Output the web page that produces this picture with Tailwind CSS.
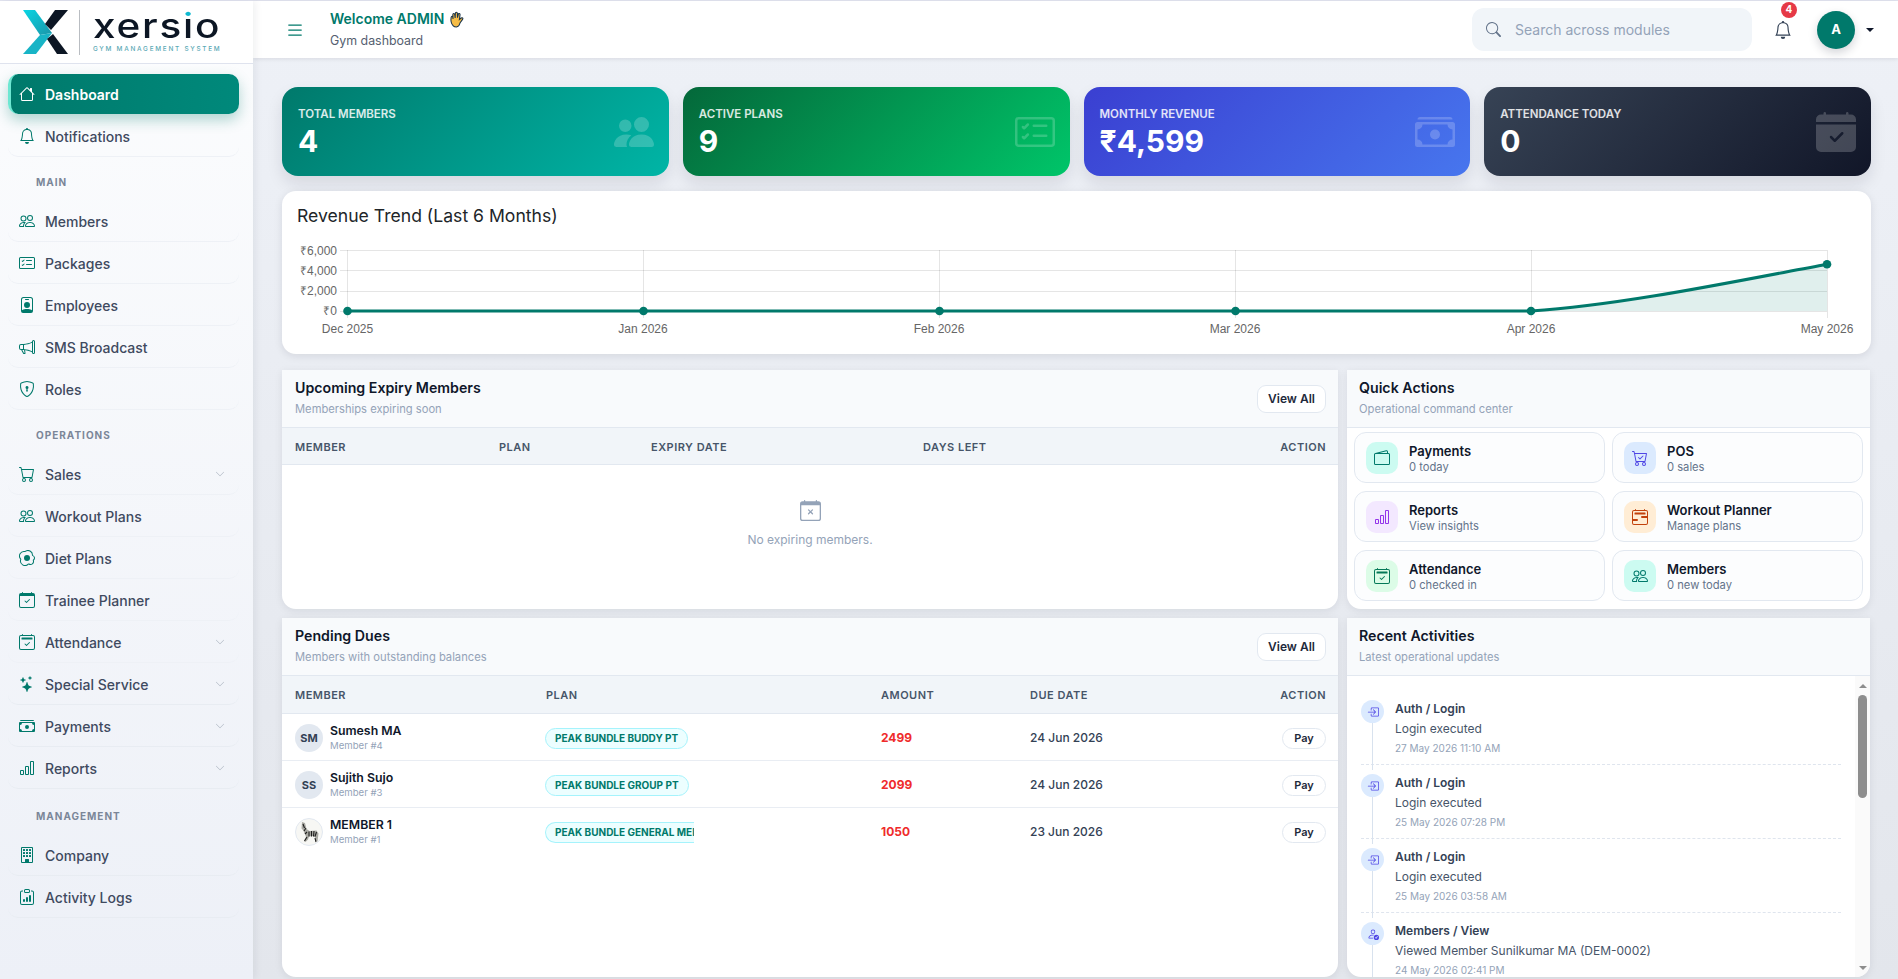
<!doctype html>
<html lang="en">
<head>
<meta charset="utf-8">
<title>Xersio Dashboard</title>
<script src="https://cdn.jsdelivr.net/npm/@tailwindcss/browser@4"></script>
</head>
<body class="m-0">
<div class="font-['Inter',sans-serif] w-[1898px] h-[979px] overflow-hidden flex flex-col bg-[#edf0f6] text-[#334155]">
  <div class="h-px bg-[#e2e4f0] shrink-0"></div>
  <div class="flex flex-1 min-h-0">

    <!-- SIDEBAR -->
    <aside class="w-[253px] shrink-0 flex flex-col bg-[linear-gradient(180deg,#fcfdfe,#edf0f7)] shadow-[2px_0_8px_rgba(15,23,42,0.07)] z-20 relative">
      <div class="h-[63px] shrink-0 bg-white border-b border-[#dfe3ee] flex items-center pl-[23px]">
        <svg class="w-[46px] h-[46px] shrink-0" viewBox="0 0 46 46">
          <defs>
            <linearGradient id="lt" x1="0" y1="0" x2="1" y2="1"><stop offset="0" stop-color="#08d6e4"/><stop offset="1" stop-color="#1b95a8"/></linearGradient>
          </defs>
          <polygon points="0,1 12,1 29,24 17,26" fill="url(#lt)"/>
          <polygon points="0,45 17,26 29,24 13,45" fill="#18b4c6"/>
          <polygon points="45,1 32,1 22,15 28,21" fill="#0c1624"/>
          <polygon points="45,45 34,45 24,30 30,25" fill="#0c1624"/>
        </svg>
        <div class="w-px h-[45px] bg-[#b9bdc2] ml-[10px] mr-[13px]"></div>
        <div class="flex flex-col w-[130px]">
          <span class="block origin-left scale-x-[1.19] text-[34px] leading-[30px] font-medium tracking-[1.5px] text-[#0c1624] h-[34px] whitespace-nowrap">xers<span class="bg-[linear-gradient(180deg,#0fb9d0_34%,#0c1624_34%)] bg-clip-text text-transparent">i</span>o</span>
          <span class="text-[6.4px] leading-[8px] font-medium tracking-[1.75px] text-[#5ba9b5] whitespace-nowrap">GYM MANAGEMENT SYSTEM</span>
        </div>
      </div>
      <nav class="pl-2 pr-[14px] pt-[10px] text-[14px] font-medium text-[#3f4a5f]">
        <a class="h-10 mb-[2px] flex items-center gap-[10px] pl-[8px] rounded-[10px] border-l-[3px] border-[#6ee7d2] bg-[linear-gradient(90deg,#00796b,#00897b)] text-white font-semibold shadow-[0_6px_14px_rgba(0,121,107,0.3)]">
          <svg class="w-4 h-4" viewBox="0 0 16 16" fill="currentColor"><path d="M8.707 1.5a1 1 0 0 0-1.414 0L.646 8.146a.5.5 0 0 0 .708.708L2 8.207V13.5A1.5 1.5 0 0 0 3.5 15h9a1.5 1.5 0 0 0 1.5-1.5V8.207l.646.647a.5.5 0 0 0 .708-.708L13 5.793V2.5a.5.5 0 0 0-.5-.5h-1a.5.5 0 0 0-.5.5v1.293zM13 7.207V13.5a.5.5 0 0 1-.5.5h-9a.5.5 0 0 1-.5-.5V7.207l5-5z"/></svg>
          Dashboard
        </a>
        <a class="h-[41px] mb-px flex items-center gap-[10px] pl-[11px] rounded-[10px] border-b border-[#eef1f6]">
          <svg class="w-4 h-4 text-[#00796b]" viewBox="0 0 16 16" fill="currentColor"><path d="M8 16a2 2 0 0 0 2-2H6a2 2 0 0 0 2 2M8 1.918l-.797.161A4 4 0 0 0 4 6c0 .628-.134 2.197-.459 3.742-.16.767-.376 1.566-.663 2.258h10.244c-.287-.692-.502-1.49-.663-2.258C12.134 8.197 12 6.628 12 6a4 4 0 0 0-3.203-3.92zM14.22 12c.223.447.481.801.78 1H1c.299-.199.557-.553.78-1C2.68 10.2 3 6.88 3 6c0-2.42 1.72-4.44 4.005-4.901a1 1 0 1 1 1.99 0A5 5 0 0 1 13 6c0 .88.32 4.2 1.22 6"/></svg>
          Notifications
        </a>
        <div class="h-[43px] pt-[5px] pl-7 flex items-center text-[10px] font-bold tracking-[1px] text-[#7b8698]">MAIN</div>
        <a class="h-[41px] mb-px flex items-center gap-[10px] pl-[11px] rounded-[10px] border-b border-[#eef1f6]">
          <svg class="w-4 h-4 text-[#00796b]" viewBox="0 0 16 16" fill="currentColor"><path d="M15 14s1 0 1-1-1-4-5-4-5 3-5 4 1 1 1 1zm-7.978-1L7 12.996c.001-.264.167-1.03.76-1.72C8.312 10.629 9.282 10 11 10c1.717 0 2.687.63 3.24 1.276.593.69.758 1.457.76 1.72l-.008.002-.014.002zM11 7a2 2 0 1 0 0-4 2 2 0 0 0 0 4m3-2a3 3 0 1 1-6 0 3 3 0 0 1 6 0M6.936 9.28a6 6 0 0 0-1.23-.247A7 7 0 0 0 5 9c-4 0-5 3-5 4q0 1 1 1h4.216A2.24 2.24 0 0 1 5 13c0-1.01.377-2.042 1.09-2.904.243-.294.526-.569.846-.816M4.92 10A5.5 5.5 0 0 0 4 13H1c0-.26.164-1.03.76-1.724.545-.636 1.492-1.256 3.16-1.275ZM1.5 5.5a3 3 0 1 1 6 0 3 3 0 0 1-6 0m3-2a2 2 0 1 0 0 4 2 2 0 0 0 0-4"/></svg>
          Members
        </a>
        <a class="h-[41px] mb-px flex items-center gap-[10px] pl-[11px] rounded-[10px] border-b border-[#eef1f6]">
          <svg class="w-4 h-4 text-[#00796b]" viewBox="0 0 16 16" fill="currentColor"><path d="M14.5 3a.5.5 0 0 1 .5.5v9a.5.5 0 0 1-.5.5h-13a.5.5 0 0 1-.5-.5v-9a.5.5 0 0 1 .5-.5zm-13-1A1.5 1.5 0 0 0 0 3.5v9A1.5 1.5 0 0 0 1.5 14h13a1.5 1.5 0 0 0 1.5-1.5v-9A1.5 1.5 0 0 0 14.5 2z"/><path d="M7 5.5a.5.5 0 0 1 .5-.5h5a.5.5 0 0 1 0 1h-5a.5.5 0 0 1-.5-.5m-1.496-.854a.5.5 0 0 1 0 .708l-1.5 1.5a.5.5 0 0 1-.708 0l-.5-.5a.5.5 0 1 1 .708-.708l.146.147 1.146-1.147a.5.5 0 0 1 .708 0M7 9.5a.5.5 0 0 1 .5-.5h5a.5.5 0 0 1 0 1h-5a.5.5 0 0 1-.5-.5m-1.496-.854a.5.5 0 0 1 0 .708l-1.5 1.5a.5.5 0 0 1-.708 0l-.5-.5a.5.5 0 0 1 .708-.708l.146.147 1.146-1.147a.5.5 0 0 1 .708 0"/></svg>
          Packages
        </a>
        <a class="h-[41px] mb-px flex items-center gap-[10px] pl-[11px] rounded-[10px] border-b border-[#eef1f6]">
          <svg class="w-4 h-4 text-[#00796b]" viewBox="0 0 16 16" fill="currentColor"><path d="M6.5 2a.5.5 0 0 0 0 1h3a.5.5 0 0 0 0-1zM11 8a3 3 0 1 1-6 0 3 3 0 0 1 6 0"/><path d="M4.5 0A2.5 2.5 0 0 0 2 2.5V14a2 2 0 0 0 2 2h8a2 2 0 0 0 2-2V2.5A2.5 2.5 0 0 0 11.5 0zM3 2.5A1.5 1.5 0 0 1 4.5 1h7A1.5 1.5 0 0 1 13 2.5v10.795a4.2 4.2 0 0 0-.776-.492C11.392 12.387 10.063 12 8 12s-3.392.387-4.224.803a4.2 4.2 0 0 0-.776.492z"/></svg>
          Employees
        </a>
        <a class="h-[41px] mb-px flex items-center gap-[10px] pl-[11px] rounded-[10px] border-b border-[#eef1f6]">
          <svg class="w-4 h-4 text-[#00796b]" viewBox="0 0 16 16" fill="currentColor"><path d="M13 2.5a1.5 1.5 0 0 1 3 0v11a1.5 1.5 0 0 1-3 0v-.214c-2.162-1.241-4.49-1.843-6.912-2.083l.405 2.712A1 1 0 0 1 5.51 15.1h-.548a1 1 0 0 1-.916-.599l-1.85-3.49-.202-.003A2.014 2.014 0 0 1 0 9V7a2.02 2.02 0 0 1 1.992-2.013 75 75 0 0 0 2.483-.075c3.043-.154 6.148-.849 8.525-2.199zm1 0v11a.5.5 0 0 0 1 0v-11a.5.5 0 0 0-1 0m-1 1.35c-2.344 1.205-5.209 1.842-8 2.033v4.233q.27.015.537.036c2.568.189 5.093.744 7.463 1.993zm-9 6.215v-4.13a95 95 0 0 1-1.992.052A1.02 1.02 0 0 0 1 7v2c0 .55.448 1.002 1.006 1.009A61 61 0 0 1 4 10.065m-.657.975 1.609 3.037.01.024h.548l-.002-.014-.443-2.966a68 68 0 0 0-1.722-.082z"/></svg>
          SMS Broadcast
        </a>
        <a class="h-[41px] mb-px flex items-center gap-[10px] pl-[11px] rounded-[10px] border-b border-[#eef1f6]">
          <svg class="w-4 h-4 text-[#00796b]" viewBox="0 0 16 16" fill="currentColor"><path d="M5.338 1.59a61 61 0 0 0-2.837.856.48.48 0 0 0-.328.39c-.554 4.157.726 7.19 2.253 9.188a10.7 10.7 0 0 0 2.287 2.233c.346.244.652.42.893.533q.18.085.293.118a1 1 0 0 0 .101.025 1 1 0 0 0 .1-.025q.114-.034.294-.118c.24-.113.547-.29.893-.533a10.7 10.7 0 0 0 2.287-2.233c1.527-1.997 2.807-5.031 2.253-9.188a.48.48 0 0 0-.328-.39c-.651-.213-1.75-.56-2.837-.855C9.552 1.29 8.531 1.067 8 1.067c-.53 0-1.552.223-2.662.524zM5.072.56C6.157.265 7.31 0 8 0s1.843.265 2.928.56c1.11.3 2.229.655 2.887.87a1.54 1.54 0 0 1 1.044 1.262c.596 4.477-.787 7.795-2.465 9.99a11.8 11.8 0 0 1-2.517 2.453 7 7 0 0 1-1.048.625c-.28.132-.581.24-.829.24s-.548-.108-.829-.24a7 7 0 0 1-1.048-.625 11.8 11.8 0 0 1-2.517-2.453C1.928 10.487.545 7.169 1.141 2.692A1.54 1.54 0 0 1 2.185 1.43 63 63 0 0 1 5.072.56"/><path d="M9.5 6.5a1.5 1.5 0 0 1-1 1.415l.385 1.99a.5.5 0 0 1-.491.595h-.788a.5.5 0 0 1-.49-.595l.384-1.99a1.5 1.5 0 1 1 2-1.415"/></svg>
          Roles
        </a>
        <div class="h-[43px] pt-[5px] pl-7 flex items-center text-[10px] font-bold tracking-[1px] text-[#7b8698]">OPERATIONS</div>
        <a class="h-[41px] mb-px flex items-center gap-[10px] pl-[11px] pr-[14px] rounded-[10px] border-b border-[#eef1f6]">
          <svg class="w-4 h-4 text-[#00796b]" viewBox="0 0 16 16" fill="currentColor"><path d="M0 1.5A.5.5 0 0 1 .5 1H2a.5.5 0 0 1 .485.379L2.89 3H14.5a.5.5 0 0 1 .491.592l-1.5 8A.5.5 0 0 1 13 12H4a.5.5 0 0 1-.491-.408L2.01 3.607 1.61 2H.5a.5.5 0 0 1-.5-.5M3.102 4l1.313 7h8.17l1.313-7zM5 12a2 2 0 1 0 0 4 2 2 0 0 0 0-4m7 0a2 2 0 1 0 0 4 2 2 0 0 0 0-4m-7 1a1 1 0 1 1 0 2 1 1 0 0 1 0-2m7 0a1 1 0 1 1 0 2 1 1 0 0 1 0-2"/></svg>
          <span class="flex-1">Sales</span>
          <svg class="w-[10px] h-[10px] text-[#a9b1bd]" viewBox="0 0 16 16" fill="currentColor"><path d="M1.646 4.646a.5.5 0 0 1 .708 0L8 10.293l5.646-5.647a.5.5 0 0 1 .708.708l-6 6a.5.5 0 0 1-.708 0l-6-6a.5.5 0 0 1 0-.708"/></svg>
        </a>
        <a class="h-[41px] mb-px flex items-center gap-[10px] pl-[11px] rounded-[10px] border-b border-[#eef1f6]">
          <svg class="w-4 h-4 text-[#00796b]" viewBox="0 0 16 16" fill="currentColor"><path d="M15 14s1 0 1-1-1-4-5-4-5 3-5 4 1 1 1 1zm-7.978-1L7 12.996c.001-.264.167-1.03.76-1.72C8.312 10.629 9.282 10 11 10c1.717 0 2.687.63 3.24 1.276.593.69.758 1.457.76 1.72l-.008.002-.014.002zM11 7a2 2 0 1 0 0-4 2 2 0 0 0 0 4m3-2a3 3 0 1 1-6 0 3 3 0 0 1 6 0M6.936 9.28a6 6 0 0 0-1.23-.247A7 7 0 0 0 5 9c-4 0-5 3-5 4q0 1 1 1h4.216A2.24 2.24 0 0 1 5 13c0-1.01.377-2.042 1.09-2.904.243-.294.526-.569.846-.816M4.92 10A5.5 5.5 0 0 0 4 13H1c0-.26.164-1.03.76-1.724.545-.636 1.492-1.256 3.16-1.275ZM1.5 5.5a3 3 0 1 1 6 0 3 3 0 0 1-6 0m3-2a2 2 0 1 0 0 4 2 2 0 0 0 0-4"/></svg>
          Workout Plans
        </a>
        <a class="h-[41px] mb-px flex items-center gap-[10px] pl-[11px] rounded-[10px] border-b border-[#eef1f6]">
          <svg class="w-4 h-4 text-[#00796b]" viewBox="0 0 16 16" fill="currentColor"><path d="M8 11a3 3 0 1 0 0-6 3 3 0 0 0 0 6"/><path d="M13.997 5.17a5 5 0 0 0-8.101-4.09A5 5 0 0 0 1.28 9.342a5 5 0 0 0 8.336 5.109 3.5 3.5 0 0 0 5.201-4.065 3.001 3.001 0 0 0-.822-5.216zm-1-.034a1 1 0 0 0 .668.977 2.001 2.001 0 0 1 .547 3.478 1 1 0 0 0-.341 1.113 2.5 2.5 0 0 1-3.715 2.905 1 1 0 0 0-1.262.152 4 4 0 0 1-6.67-4.087 1 1 0 0 0-.2-1 4 4 0 0 1 3.693-6.61 1 1 0 0 0 .8-.2 4 4 0 0 1 6.48 3.273z"/></svg>
          Diet Plans
        </a>
        <a class="h-[41px] mb-px flex items-center gap-[10px] pl-[11px] rounded-[10px] border-b border-[#eef1f6]">
          <svg class="w-4 h-4 text-[#00796b]" viewBox="0 0 16 16" fill="currentColor"><path d="M10.854 7.146a.5.5 0 0 1 0 .708l-3 3a.5.5 0 0 1-.708 0l-1.5-1.5a.5.5 0 1 1 .708-.708L7.5 9.793l2.646-2.647a.5.5 0 0 1 .708 0"/><path d="M3.5 0a.5.5 0 0 1 .5.5V1h8V.5a.5.5 0 0 1 1 0V1h1a2 2 0 0 1 2 2v11a2 2 0 0 1-2 2H2a2 2 0 0 1-2-2V3a2 2 0 0 1 2-2h1V.5a.5.5 0 0 1 .5-.5M1 4v10a1 1 0 0 0 1 1h12a1 1 0 0 0 1-1V4z"/></svg>
          Trainee Planner
        </a>
        <a class="h-[41px] mb-px flex items-center gap-[10px] pl-[11px] pr-[14px] rounded-[10px] border-b border-[#eef1f6]">
          <svg class="w-4 h-4 text-[#00796b]" viewBox="0 0 16 16" fill="currentColor"><path d="M10.854 8.146a.5.5 0 0 1 0 .708l-3 3a.5.5 0 0 1-.708 0l-1.5-1.5a.5.5 0 0 1 .708-.708L7.5 10.793l2.646-2.647a.5.5 0 0 1 .708 0"/><path d="M3.5 0a.5.5 0 0 1 .5.5V1h8V.5a.5.5 0 0 1 1 0V1h1a2 2 0 0 1 2 2v11a2 2 0 0 1-2 2H2a2 2 0 0 1-2-2V3a2 2 0 0 1 2-2h1V.5a.5.5 0 0 1 .5-.5M2 2a1 1 0 0 0-1 1v11a1 1 0 0 0 1 1h12a1 1 0 0 0 1-1V3a1 1 0 0 0-1-1z"/><path d="M2.5 4a.5.5 0 0 1 .5-.5h10a.5.5 0 0 1 .5.5v1a.5.5 0 0 1-.5.5H3a.5.5 0 0 1-.5-.5z"/></svg>
          <span class="flex-1">Attendance</span>
          <svg class="w-[10px] h-[10px] text-[#a9b1bd]" viewBox="0 0 16 16" fill="currentColor"><path d="M1.646 4.646a.5.5 0 0 1 .708 0L8 10.293l5.646-5.647a.5.5 0 0 1 .708.708l-6 6a.5.5 0 0 1-.708 0l-6-6a.5.5 0 0 1 0-.708"/></svg>
        </a>
        <a class="h-[41px] mb-px flex items-center gap-[10px] pl-[11px] pr-[14px] rounded-[10px] border-b border-[#e8ecf2]">
          <svg class="w-4 h-4 text-[#00796b]" viewBox="0 0 16 16" fill="currentColor"><path d="M7.657 6.247c.11-.33.576-.33.686 0l.645 1.937a2.89 2.89 0 0 0 1.829 1.828l1.936.645c.33.11.33.576 0 .686l-1.937.645a2.89 2.89 0 0 0-1.828 1.829l-.645 1.936a.361.361 0 0 1-.686 0l-.645-1.937a2.89 2.89 0 0 0-1.828-1.828l-1.937-.645a.361.361 0 0 1 0-.686l1.937-.645a2.89 2.89 0 0 0 1.828-1.828zM3.794 1.148a.217.217 0 0 1 .412 0l.387 1.162c.173.518.579.924 1.097 1.097l1.162.387a.217.217 0 0 1 0 .412l-1.162.387A1.73 1.73 0 0 0 4.593 5.69l-.387 1.162a.217.217 0 0 1-.412 0L3.407 5.69A1.73 1.73 0 0 0 2.31 4.593l-1.162-.387a.217.217 0 0 1 0-.412l1.162-.387A1.73 1.73 0 0 0 3.407 2.31zM10.863.099a.145.145 0 0 1 .274 0l.258.774c.115.346.386.617.732.732l.774.258a.145.145 0 0 1 0 .274l-.774.258a1.16 1.16 0 0 0-.732.732l-.258.774a.145.145 0 0 1-.274 0l-.258-.774a1.16 1.16 0 0 0-.732-.732L9.1 2.137a.145.145 0 0 1 0-.274l.774-.258c.346-.115.617-.386.732-.732z"/></svg>
          <span class="flex-1">Special Service</span>
          <svg class="w-[10px] h-[10px] text-[#a9b1bd]" viewBox="0 0 16 16" fill="currentColor"><path d="M1.646 4.646a.5.5 0 0 1 .708 0L8 10.293l5.646-5.647a.5.5 0 0 1 .708.708l-6 6a.5.5 0 0 1-.708 0l-6-6a.5.5 0 0 1 0-.708"/></svg>
        </a>
        <a class="h-[41px] mb-px flex items-center gap-[10px] pl-[11px] pr-[14px] rounded-[10px] border-b border-[#e8ecf2]">
          <svg class="w-4 h-4 text-[#00796b]" viewBox="0 0 16 16" fill="currentColor"><path d="M1 3a1 1 0 0 1 1-1h12a1 1 0 0 1 1 1zm7 8a2 2 0 1 0 0-4 2 2 0 0 0 0 4"/><path d="M0 5a1 1 0 0 1 1-1h14a1 1 0 0 1 1 1v8a1 1 0 0 1-1 1H1a1 1 0 0 1-1-1zm3 0a2 2 0 0 1-2 2v4a2 2 0 0 1 2 2h10a2 2 0 0 1 2-2V7a2 2 0 0 1-2-2z"/></svg>
          <span class="flex-1">Payments</span>
          <svg class="w-[10px] h-[10px] text-[#a9b1bd]" viewBox="0 0 16 16" fill="currentColor"><path d="M1.646 4.646a.5.5 0 0 1 .708 0L8 10.293l5.646-5.647a.5.5 0 0 1 .708.708l-6 6a.5.5 0 0 1-.708 0l-6-6a.5.5 0 0 1 0-.708"/></svg>
        </a>
        <a class="h-[41px] mb-px flex items-center gap-[10px] pl-[11px] pr-[14px] rounded-[10px] border-b border-[#e8ecf2]">
          <svg class="w-4 h-4 text-[#00796b]" viewBox="0 0 16 16" fill="currentColor"><path d="M4 11H2v3h2zm5-4H7v7h2zm5-5v12h-2V2zm-2-1a1 1 0 0 0-1 1v12a1 1 0 0 0 1 1h2a1 1 0 0 0 1-1V2a1 1 0 0 0-1-1zM6 7a1 1 0 0 1 1-1h2a1 1 0 0 1 1 1v7a1 1 0 0 1-1 1H7a1 1 0 0 1-1-1zm-5 4a1 1 0 0 1 1-1h2a1 1 0 0 1 1 1v3a1 1 0 0 1-1 1H2a1 1 0 0 1-1-1z"/></svg>
          <span class="flex-1">Reports</span>
          <svg class="w-[10px] h-[10px] text-[#a9b1bd]" viewBox="0 0 16 16" fill="currentColor"><path d="M1.646 4.646a.5.5 0 0 1 .708 0L8 10.293l5.646-5.647a.5.5 0 0 1 .708.708l-6 6a.5.5 0 0 1-.708 0l-6-6a.5.5 0 0 1 0-.708"/></svg>
        </a>
        <div class="h-[45px] pt-[7px] pl-7 flex items-center text-[10px] font-bold tracking-[1px] text-[#7b8698]">MANAGEMENT</div>
        <a class="h-[41px] mb-px flex items-center gap-[10px] pl-[11px] rounded-[10px] border-b border-[#e8ecf2]">
          <svg class="w-4 h-4 text-[#00796b]" viewBox="0 0 16 16" fill="currentColor"><path d="M4 2.5a.5.5 0 0 1 .5-.5h1a.5.5 0 0 1 .5.5v1a.5.5 0 0 1-.5.5h-1a.5.5 0 0 1-.5-.5zm3 0a.5.5 0 0 1 .5-.5h1a.5.5 0 0 1 .5.5v1a.5.5 0 0 1-.5.5h-1a.5.5 0 0 1-.5-.5zm3.5-.5a.5.5 0 0 0-.5.5v1a.5.5 0 0 0 .5.5h1a.5.5 0 0 0 .5-.5v-1a.5.5 0 0 0-.5-.5zM4 5.5a.5.5 0 0 1 .5-.5h1a.5.5 0 0 1 .5.5v1a.5.5 0 0 1-.5.5h-1a.5.5 0 0 1-.5-.5zM7.5 5a.5.5 0 0 0-.5.5v1a.5.5 0 0 0 .5.5h1a.5.5 0 0 0 .5-.5v-1a.5.5 0 0 0-.5-.5zm2.5.5a.5.5 0 0 1 .5-.5h1a.5.5 0 0 1 .5.5v1a.5.5 0 0 1-.5.5h-1a.5.5 0 0 1-.5-.5zM4.5 8a.5.5 0 0 0-.5.5v1a.5.5 0 0 0 .5.5h1a.5.5 0 0 0 .5-.5v-1a.5.5 0 0 0-.5-.5zm2.5.5a.5.5 0 0 1 .5-.5h1a.5.5 0 0 1 .5.5v1a.5.5 0 0 1-.5.5h-1a.5.5 0 0 1-.5-.5zm3.5-.5a.5.5 0 0 0-.5.5v1a.5.5 0 0 0 .5.5h1a.5.5 0 0 0 .5-.5v-1a.5.5 0 0 0-.5-.5z"/><path d="M2 1a1 1 0 0 1 1-1h10a1 1 0 0 1 1 1v14a1 1 0 0 1-1 1H3a1 1 0 0 1-1-1zm11 0H3v14h3v-2.5a.5.5 0 0 1 .5-.5h3a.5.5 0 0 1 .5.5V15h3z"/></svg>
          Company
        </a>
        <a class="h-[41px] mb-px flex items-center gap-[10px] pl-[11px] rounded-[10px] border-b border-[#e8ecf2]">
          <svg class="w-4 h-4 text-[#00796b]" viewBox="0 0 16 16" fill="currentColor"><path d="M4 11a1 1 0 1 1 2 0v1a1 1 0 1 1-2 0zm6-4a1 1 0 1 1 2 0v5a1 1 0 1 1-2 0zM7 9a1 1 0 0 1 2 0v3a1 1 0 1 1-2 0z"/><path d="M4 1.5H3a2 2 0 0 0-2 2V14a2 2 0 0 0 2 2h10a2 2 0 0 0 2-2V3.5a2 2 0 0 0-2-2h-1v1h1a1 1 0 0 1 1 1V14a1 1 0 0 1-1 1H3a1 1 0 0 1-1-1V3.5a1 1 0 0 1 1-1h1z"/><path d="M9.5 1a.5.5 0 0 1 .5.5v1a.5.5 0 0 1-.5.5h-3a.5.5 0 0 1-.5-.5v-1a.5.5 0 0 1 .5-.5zm-3-1A1.5 1.5 0 0 0 5 1.5v1A1.5 1.5 0 0 0 6.5 4h3A1.5 1.5 0 0 0 11 2.5v-1A1.5 1.5 0 0 0 9.5 0z"/></svg>
          Activity Logs
        </a>
      </nav>
    </aside>

    <!-- MAIN -->
    <div class="flex-1 min-w-0 flex flex-col bg-[linear-gradient(180deg,#eef1f7,#e3e6ec)]">
      <header class="h-[57px] shrink-0 bg-white shadow-[0_1px_4px_rgba(15,23,42,0.1)] flex items-center pl-[32px] pr-[24px] z-10">
        <svg class="w-5 h-5 text-[#00796b]" viewBox="0 0 16 16" fill="currentColor"><path d="M2.5 12a.5.5 0 0 1 .5-.5h10a.5.5 0 0 1 0 1H3a.5.5 0 0 1-.5-.5m0-4a.5.5 0 0 1 .5-.5h10a.5.5 0 0 1 0 1H3a.5.5 0 0 1-.5-.5m0-4a.5.5 0 0 1 .5-.5h10a.5.5 0 0 1 0 1H3a.5.5 0 0 1-.5-.5"/></svg>
        <div class="ml-[25px] flex flex-col">
          <div class="flex items-center gap-[5px] text-[14px] leading-[20px] font-semibold text-[#00796b]">Welcome ADMIN
            <svg class="w-[17px] h-[17px] shrink-0" viewBox="0 0 16 16"><path d="M4 14C2 12 1.5 9 2 6c.3-1.5 1.5-1.3 1.6 0l.2 1.5-.2-4c0-1.5 1.6-1.5 1.8-.1l.4 3.1.2-4.3c0-1.4 1.8-1.4 1.9 0L8 6.3 8.8 3c.3-1.2 1.8-.8 1.6.5L9.8 8l1.7-1.4c1-.8 2.1.3 1.3 1.3L10.500 11c-.7 2.500-1.700 4-3.500 4-1.200 0-2.200-.2-3-1z" fill="#f6bc45" stroke="#17324a" stroke-width="1"/></svg>
          </div>
          <div class="mt-[3px] text-[12.4px] leading-[18px] text-[#556070]">Gym dashboard</div>
        </div>
        <div class="ml-auto w-[280px] h-[43px] rounded-xl bg-[#f1f5f9] flex items-center pl-[14px] gap-[14px]">
          <svg class="w-[15px] h-[15px] text-[#64748b]" viewBox="0 0 16 16" fill="currentColor"><path d="M11.742 10.344a6.5 6.5 0 1 0-1.397 1.398h-.001q.044.06.098.115l3.85 3.85a1 1 0 0 0 1.415-1.414l-3.85-3.85a1 1 0 0 0-.115-.1zM12 6.5a5.500 5.500 0 1 1-11 0 5.500 5.500 0 0 1 11 0"/></svg>
          <span class="text-[14px] text-[#94a3b8]">Search across modules</span>
        </div>
        <div class="relative ml-[22px] w-[18px] h-[18px]">
          <svg class="w-[18px] h-[18px] text-[#334155]" viewBox="0 0 16 16" fill="currentColor"><path d="M8 16a2 2 0 0 0 2-2H6a2 2 0 0 0 2 2M8 1.918l-.797.161A4 4 0 0 0 4 6c0 .628-.134 2.197-.459 3.742-.16.767-.376 1.566-.663 2.258h10.244c-.287-.692-.502-1.49-.663-2.258C12.134 8.197 12 6.628 12 6a4 4 0 0 0-3.203-3.92zM14.22 12c.223.447.481.801.78 1H1c.299-.199.557-.553.78-1C2.68 10.2 3 6.88 3 6c0-2.42 1.72-4.44 4.005-4.901a1 1 0 1 1 1.99 0A5 5 0 0 1 13 6c0 .88.32 4.2 1.22 6"/></svg>
          <span class="absolute -top-[19px] left-[7px] w-4 h-4 rounded-full bg-[#e63946] text-white text-[10px] font-bold flex items-center justify-center">4</span>
        </div>
        <div class="ml-[25px] w-[38px] h-[38px] rounded-full bg-[#00796b] text-white text-[13px] font-bold flex items-center justify-center shadow-[0_4px_10px_rgba(15,23,42,0.18)]">A</div>
        <div class="ml-[11px] w-0 h-0 border-x-[4px] border-x-transparent border-t-[4px] border-t-[#0f172a]"></div>
      </header>

      <main class="flex-1 min-h-0 pl-[29px] pr-[27px] pt-[29px] flex flex-col">
        <div class="grid grid-cols-4 gap-[14px] h-[89px] shrink-0">
          <div class="rounded-2xl bg-[linear-gradient(135deg,#00796b,#00b5a6)] pl-4 pr-[15px] flex items-center justify-between text-white shadow-[0_8px_16px_rgba(15,23,42,0.1)]">
            <div><div class="pt-px text-[11.5px] leading-[16px] font-semibold text-white/85">TOTAL MEMBERS</div><div class="text-[30px] leading-[36px] font-bold mt-[1px]">4</div></div>
            <svg class="w-10 h-10 text-white/20" viewBox="0 0 16 16" fill="currentColor"><path d="M7 14s-1 0-1-1 1-4 5-4 5 3 5 4-1 1-1 1zm4-6a3 3 0 1 0 0-6 3 3 0 0 0 0 6m-5.784 6A2.24 2.24 0 0 1 5 13c0-1.355.68-2.75 1.936-3.72A6.3 6.3 0 0 0 5 9c-4 0-5 3-5 4s1 1 1 1zM4.5 8a2.5 2.5 0 1 0 0-5 2.5 2.5 0 0 0 0 5"/></svg>
          </div>
          <div class="rounded-2xl bg-[linear-gradient(135deg,#04683a,#00c569)] pl-4 pr-[15px] flex items-center justify-between text-white shadow-[0_8px_16px_rgba(15,23,42,0.1)]">
            <div><div class="pt-px text-[11.5px] leading-[16px] font-semibold text-white/85">ACTIVE PLANS</div><div class="text-[30px] leading-[36px] font-bold mt-[1px]">9</div></div>
            <svg class="w-10 h-10 text-white/20" viewBox="0 0 16 16" fill="currentColor"><path d="M14.5 3a.5.5 0 0 1 .5.5v9a.5.5 0 0 1-.5.5h-13a.5.5 0 0 1-.5-.5v-9a.5.5 0 0 1 .5-.5zm-13-1A1.5 1.5 0 0 0 0 3.5v9A1.5 1.5 0 0 0 1.5 14h13a1.5 1.5 0 0 0 1.5-1.5v-9A1.5 1.5 0 0 0 14.5 2z"/><path d="M7 5.5a.5.5 0 0 1 .5-.5h5a.5.5 0 0 1 0 1h-5a.5.5 0 0 1-.5-.5m-1.496-.854a.5.5 0 0 1 0 .708l-1.5 1.5a.5.5 0 0 1-.708 0l-.5-.5a.5.5 0 1 1 .708-.708l.146.147 1.146-1.147a.5.5 0 0 1 .708 0M7 9.5a.5.5 0 0 1 .5-.5h5a.5.5 0 0 1 0 1h-5a.5.5 0 0 1-.5-.5m-1.496-.854a.5.5 0 0 1 0 .708l-1.5 1.5a.5.5 0 0 1-.708 0l-.5-.5a.5.5 0 0 1 .708-.708l.146.147 1.146-1.147a.5.5 0 0 1 .708 0"/></svg>
          </div>
          <div class="rounded-2xl bg-[linear-gradient(135deg,#3a3fd1,#4776ee)] pl-4 pr-[15px] flex items-center justify-between text-white shadow-[0_8px_16px_rgba(15,23,42,0.1)]">
            <div><div class="pt-px text-[11.5px] leading-[16px] font-semibold text-white/85">MONTHLY REVENUE</div><div class="text-[30px] leading-[36px] font-bold mt-[1px]">₹4,599</div></div>
            <svg class="w-10 h-10 text-white/20" viewBox="0 0 16 16" fill="currentColor"><path d="M1 3a1 1 0 0 1 1-1h12a1 1 0 0 1 1 1zm7 8a2 2 0 1 0 0-4 2 2 0 0 0 0 4"/><path d="M0 5a1 1 0 0 1 1-1h14a1 1 0 0 1 1 1v8a1 1 0 0 1-1 1H1a1 1 0 0 1-1-1zm3 0a2 2 0 0 1-2 2v4a2 2 0 0 1 2 2h10a2 2 0 0 1 2-2V7a2 2 0 0 1-2-2z"/></svg>
          </div>
          <div class="rounded-2xl bg-[linear-gradient(135deg,#374355,#111628)] pl-4 pr-[15px] flex items-center justify-between text-white shadow-[0_8px_16px_rgba(15,23,42,0.1)]">
            <div><div class="pt-px text-[11.5px] leading-[16px] font-semibold text-white/85">ATTENDANCE TODAY</div><div class="text-[30px] leading-[36px] font-bold mt-[1px]">0</div></div>
            <svg class="w-10 h-10 text-white/20" viewBox="0 0 16 16" fill="currentColor"><path d="M4 .5a.5.5 0 0 0-1 0V1H2a2 2 0 0 0-2 2v1h16V3a2 2 0 0 0-2-2h-1V.5a.5.5 0 0 0-1 0V1H4zM16 14V5H0v9a2 2 0 0 0 2 2h12a2 2 0 0 0 2-2m-5.146-5.146-3 3a.5.5 0 0 1-.708 0l-1.5-1.5a.5.5 0 0 1 .708-.708L7.5 10.793l2.646-2.647a.5.5 0 0 1 .708.708"/></svg>
          </div>
        </div>

        <section class="mt-[15px] h-[163px] shrink-0 rounded-[14px] bg-white shadow-[0_2px_8px_rgba(15,23,42,0.1)] flex flex-col">
          <h2 class="h-[49px] shrink-0 pl-[15px] pt-[13px] text-[17.6px] leading-[24px] font-normal text-[#212529]">Revenue Trend (Last 6 Months)</h2>
          <svg class="block" width="1589" height="114" viewBox="0 0 1589 114" font-family="Liberation Sans, Arial, sans-serif" font-size="12" fill="#666">
            <g stroke="rgba(0,0,0,0.1)" stroke-width="1" fill="none">
              <path d="M58 10.5H1545M58 30.5H1545M58 51.5H1545M58 71.5H1545"/>
              <path d="M65.5 10V78M361.5 10V78M657.5 10V78M953.5 10V78M1249.5 10V78M1545.5 10V78"/>
            </g>
            <path d="M1249 71C1340 65 1450 42 1545 24.200V71Z" fill="rgba(0,121,107,0.12)"/>
            <path d="M65 71H1249C1340 65 1450 42 1545 24.200" fill="none" stroke="#00796b" stroke-width="3"/>
            <g fill="#00796b"><circle cx="65.500" cy="71" r="4.300"/><circle cx="361.500" cy="71" r="4.300"/><circle cx="657.500" cy="71" r="4.300"/><circle cx="953.500" cy="71" r="4.300"/><circle cx="1249" cy="71" r="4.300"/><circle cx="1545" cy="24.200" r="4.300"/></g>
            <g text-anchor="end"><text x="55" y="14.500">₹6,000</text><text x="55" y="34.500">₹4,000</text><text x="55" y="55">₹2,000</text><text x="55" y="75">₹0</text></g>
            <g text-anchor="middle"><text x="65.500" y="93">Dec 2025</text><text x="361" y="93">Jan 2026</text><text x="657" y="93">Feb 2026</text><text x="953" y="93">Mar 2026</text><text x="1249" y="93">Apr 2026</text><text x="1545" y="93">May 2026</text></g>
          </svg>
        </section>

        <div class="mt-4 grid grid-cols-[1056px_523px] grid-rows-[239px_359px] gap-[9px]">
          <!-- Upcoming -->
          <section class="rounded-b-[14px] bg-white shadow-[0_2px_8px_rgba(15,23,42,0.08)] overflow-hidden flex flex-col">
            <div class="h-[58px] shrink-0 bg-[#f8fafc] border-b border-[#e2e8f0] pl-[13px] pr-3 flex items-center justify-between">
              <div class="pb-px"><div class="text-[14.2px] leading-[18px] font-semibold text-[#0f172a]">Upcoming Expiry Members</div><div class="mt-[4px] text-[11.2px] leading-[16px] text-[#94a3b8]">Memberships expiring soon</div></div>
              <div class="w-[69px] h-7 rounded-[9px] border border-[#e2e8f0] bg-white text-[12px] font-semibold text-[#1e293b] flex items-center justify-center">View All</div>
            </div>
            <div class="h-[37px] shrink-0 pt-[2px] bg-[#f1f5f9] border-b border-[#e2e8f0] pl-[13px] pr-3 grid grid-cols-[204px_152px_272px_1fr_auto] items-center text-[11px] font-semibold tracking-[0.5px] text-[#475569]">
              <span>MEMBER</span><span>PLAN</span><span>EXPIRY DATE</span><span>DAYS LEFT</span><span>ACTION</span>
            </div>
            <div class="flex-1 flex flex-col items-center pt-[35px] text-[#94a3b8]">
              <svg class="w-[21px] h-[21px]" viewBox="0 0 16 16" fill="currentColor"><path d="M6.146 7.146a.5.5 0 0 1 .708 0L8 8.293l1.146-1.147a.5.5 0 1 1 .708.708L8.707 9l1.147 1.146a.5.5 0 0 1-.708.708L8 9.707l-1.146 1.147a.5.5 0 0 1-.708-.708L7.293 9 6.146 7.854a.5.5 0 0 1 0-.708"/><path d="M3.5 0a.5.5 0 0 1 .5.5V1h8V.5a.5.5 0 0 1 1 0V1h1a2 2 0 0 1 2 2v11a2 2 0 0 1-2 2H2a2 2 0 0 1-2-2V3a2 2 0 0 1 2-2h1V.5a.5.5 0 0 1 .5-.5M1 4v10a1 1 0 0 0 1 1h12a1 1 0 0 0 1-1V4z"/></svg>
              <div class="mt-[10px] text-[12px] leading-[18px]">No expiring members.</div>
            </div>
          </section>

          <!-- Quick actions -->
          <section class="rounded-b-[14px] bg-white shadow-[0_2px_8px_rgba(15,23,42,0.08)] overflow-hidden flex flex-col">
            <div class="h-[58px] shrink-0 bg-[#f8fafc] border-b border-[#e2e8f0] px-3 flex items-center">
              <div class="pb-px"><div class="text-[14.2px] leading-[18px] font-semibold text-[#0f172a]">Quick Actions</div><div class="mt-[4px] text-[11.2px] leading-[16px] text-[#94a3b8]">Operational command center</div></div>
            </div>
            <div class="grid grid-cols-2 gap-x-[7px] gap-y-2 px-[7px] pt-[4px] auto-rows-[51px]">
              <div class="rounded-xl border border-[#e2e8f0] bg-[#fcfdfe] flex items-center pl-[11px] gap-[11px]">
                <div class="w-8 h-8 rounded-[10px] bg-[#ccfbf1] flex items-center justify-center"><svg class="w-4 h-4 text-[#00796b]" viewBox="0 0 16 16" fill="currentColor"><path d="M12.136.326A1.5 1.5 0 0 1 14 1.78V3h.5A1.5 1.5 0 0 1 16 4.5v9a1.5 1.5 0 0 1-1.5 1.5h-13A1.5 1.5 0 0 1 0 13.5v-9a1.5 1.5 0 0 1 1.432-1.499zM5.562 3H13V1.78a.5.5 0 0 0-.621-.484zM1.5 4a.5.5 0 0 0-.5.5v9a.5.5 0 0 0 .5.5h13a.5.5 0 0 0 .5-.5v-9a.5.5 0 0 0-.5-.5z"/></svg></div>
                <div class="pt-[2px]"><div class="text-[13px] leading-[16px] font-semibold text-[#0f172a]">Payments</div><div class="text-[11.2px] leading-[16px] text-[#64748b]">0 today</div></div>
              </div>
              <div class="rounded-xl border border-[#e2e8f0] bg-[#fcfdfe] flex items-center pl-[11px] gap-[11px]">
                <div class="w-8 h-8 rounded-[10px] bg-[#dbeafe] flex items-center justify-center"><svg class="w-4 h-4 text-[#4f46e5]" viewBox="0 0 16 16" fill="currentColor"><path d="M11.354 6.354a.5.5 0 0 0-.708-.708L8 8.293 6.854 7.146a.5.5 0 1 0-.708.708l1.5 1.5a.5.5 0 0 0 .708 0z"/><path d="M0 1.5A.5.5 0 0 1 .5 1H2a.5.5 0 0 1 .485.379L2.89 3H14.5a.5.5 0 0 1 .491.592l-1.5 8A.5.5 0 0 1 13 12H4a.5.5 0 0 1-.491-.408L2.01 3.607 1.61 2H.5a.5.5 0 0 1-.5-.5M3.102 4l1.313 7h8.17l1.313-7zM5 12a2 2 0 1 0 0 4 2 2 0 0 0 0-4m7 0a2 2 0 1 0 0 4 2 2 0 0 0 0-4m-7 1a1 1 0 1 1 0 2 1 1 0 0 1 0-2m7 0a1 1 0 1 1 0 2 1 1 0 0 1 0-2"/></svg></div>
                <div class="pt-[2px]"><div class="text-[13px] leading-[16px] font-semibold text-[#0f172a]">POS</div><div class="text-[11.2px] leading-[16px] text-[#64748b]">0 sales</div></div>
              </div>
              <div class="rounded-xl border border-[#e2e8f0] bg-[#fcfdfe] flex items-center pl-[11px] gap-[11px]">
                <div class="w-8 h-8 rounded-[10px] bg-[#f3e8ff] flex items-center justify-center"><svg class="w-4 h-4 text-[#9333ea]" viewBox="0 0 16 16" fill="currentColor"><path d="M4 11H2v3h2zm5-4H7v7h2zm5-5v12h-2V2zm-2-1a1 1 0 0 0-1 1v12a1 1 0 0 0 1 1h2a1 1 0 0 0 1-1V2a1 1 0 0 0-1-1zM6 7a1 1 0 0 1 1-1h2a1 1 0 0 1 1 1v7a1 1 0 0 1-1 1H7a1 1 0 0 1-1-1zm-5 4a1 1 0 0 1 1-1h2a1 1 0 0 1 1 1v3a1 1 0 0 1-1 1H2a1 1 0 0 1-1-1z"/></svg></div>
                <div class="pt-[2px]"><div class="text-[13px] leading-[16px] font-semibold text-[#0f172a]">Reports</div><div class="text-[11.2px] leading-[16px] text-[#64748b]">View insights</div></div>
              </div>
              <div class="rounded-xl border border-[#e2e8f0] bg-[#fcfdfe] flex items-center pl-[11px] gap-[11px]">
                <div class="w-8 h-8 rounded-[10px] bg-[#ffedd5] flex items-center justify-center"><svg class="w-4 h-4 text-[#c2410c]" viewBox="0 0 16 16" fill="currentColor"><path d="M3.5 0a.5.5 0 0 1 .5.5V1h8V.5a.5.5 0 0 1 1 0V1h1a2 2 0 0 1 2 2v11a2 2 0 0 1-2 2H2a2 2 0 0 1-2-2V3a2 2 0 0 1 2-2h1V.5a.5.5 0 0 1 .5-.5M2 2a1 1 0 0 0-1 1v11a1 1 0 0 0 1 1h12a1 1 0 0 0 1-1V3a1 1 0 0 0-1-1z"/><path d="M2.5 4a.5.5 0 0 1 .5-.5h10a.5.5 0 0 1 .5.5v1a.5.5 0 0 1-.5.5H3a.5.5 0 0 1-.5-.5zM9 8a1 1 0 0 1 1-1h5v2h-5a1 1 0 0 1-1-1m-8 2h4a1 1 0 1 1 0 2H1z"/></svg></div>
                <div class="pt-[2px]"><div class="text-[13px] leading-[16px] font-semibold text-[#0f172a]">Workout Planner</div><div class="text-[11.2px] leading-[16px] text-[#64748b]">Manage plans</div></div>
              </div>
              <div class="rounded-xl border border-[#e2e8f0] bg-[#fcfdfe] flex items-center pl-[11px] gap-[11px]">
                <div class="w-8 h-8 rounded-[10px] bg-[#dcfce7] flex items-center justify-center"><svg class="w-4 h-4 text-[#047857]" viewBox="0 0 16 16" fill="currentColor"><path d="M10.854 8.146a.5.5 0 0 1 0 .708l-3 3a.5.5 0 0 1-.708 0l-1.5-1.5a.5.5 0 0 1 .708-.708L7.5 10.793l2.646-2.647a.5.5 0 0 1 .708 0"/><path d="M3.5 0a.5.5 0 0 1 .5.5V1h8V.5a.5.5 0 0 1 1 0V1h1a2 2 0 0 1 2 2v11a2 2 0 0 1-2 2H2a2 2 0 0 1-2-2V3a2 2 0 0 1 2-2h1V.5a.5.5 0 0 1 .5-.5M2 2a1 1 0 0 0-1 1v11a1 1 0 0 0 1 1h12a1 1 0 0 0 1-1V3a1 1 0 0 0-1-1z"/><path d="M2.5 4a.5.5 0 0 1 .5-.5h10a.5.5 0 0 1 .5.5v1a.5.5 0 0 1-.5.5H3a.5.5 0 0 1-.5-.5z"/></svg></div>
                <div class="pt-[2px]"><div class="text-[13px] leading-[16px] font-semibold text-[#0f172a]">Attendance</div><div class="text-[11.2px] leading-[16px] text-[#64748b]">0 checked in</div></div>
              </div>
              <div class="rounded-xl border border-[#e2e8f0] bg-[#fcfdfe] flex items-center pl-[11px] gap-[11px]">
                <div class="w-8 h-8 rounded-[10px] bg-[#ccfbf1] flex items-center justify-center"><svg class="w-4 h-4 text-[#00796b]" viewBox="0 0 16 16" fill="currentColor"><path d="M15 14s1 0 1-1-1-4-5-4-5 3-5 4 1 1 1 1zm-7.978-1L7 12.996c.001-.264.167-1.03.76-1.72C8.312 10.629 9.282 10 11 10c1.717 0 2.687.63 3.24 1.276.593.69.758 1.457.76 1.72l-.008.002-.014.002zM11 7a2 2 0 1 0 0-4 2 2 0 0 0 0 4m3-2a3 3 0 1 1-6 0 3 3 0 0 1 6 0M6.936 9.28a6 6 0 0 0-1.23-.247A7 7 0 0 0 5 9c-4 0-5 3-5 4q0 1 1 1h4.216A2.24 2.24 0 0 1 5 13c0-1.01.377-2.042 1.09-2.904.243-.294.526-.569.846-.816M4.92 10A5.5 5.5 0 0 0 4 13H1c0-.26.164-1.03.76-1.724.545-.636 1.492-1.256 3.16-1.275ZM1.5 5.5a3 3 0 1 1 6 0 3 3 0 0 1-6 0m3-2a2 2 0 1 0 0 4 2 2 0 0 0 0-4"/></svg></div>
                <div class="pt-[2px]"><div class="text-[13px] leading-[16px] font-semibold text-[#0f172a]">Members</div><div class="text-[11.2px] leading-[16px] text-[#64748b]">0 new today</div></div>
              </div>
            </div>
          </section>

          <!-- Pending dues -->
          <section class="rounded-b-[14px] bg-white shadow-[0_2px_8px_rgba(15,23,42,0.08)] overflow-hidden flex flex-col">
            <div class="h-[58px] shrink-0 bg-[#f8fafc] border-b border-[#e2e8f0] pl-[13px] pr-3 flex items-center justify-between">
              <div class="pb-px"><div class="text-[14.2px] leading-[18px] font-semibold text-[#0f172a]">Pending Dues</div><div class="mt-[4px] text-[11.2px] leading-[16px] text-[#94a3b8]">Members with outstanding balances</div></div>
              <div class="w-[69px] h-7 rounded-[9px] border border-[#e2e8f0] bg-white text-[12px] font-semibold text-[#1e293b] flex items-center justify-center">View All</div>
            </div>
            <div class="h-[38px] shrink-0 pt-px bg-[#f1f5f9] border-b border-[#e2e8f0] pl-[13px] pr-3 grid grid-cols-[251px_335px_149px_1fr_auto] items-center text-[11px] font-semibold tracking-[0.5px] text-[#475569]">
              <span>MEMBER</span><span>PLAN</span><span>AMOUNT</span><span>DUE DATE</span><span>ACTION</span>
            </div>
            <div class="h-[47px] pt-[2px] border-b border-[#e9edf3] pl-[13px] pr-3 grid grid-cols-[251px_335px_149px_1fr_auto] items-center">
              <div class="flex items-center gap-[7px]"><div class="w-7 h-7 rounded-full bg-[#e2e8f0] text-[11px] font-bold text-[#334155] flex items-center justify-center">SM</div><div><div class="text-[12.3px] leading-[15px] font-semibold text-[#0f172a]">Sumesh MA</div><div class="text-[9.6px] leading-[15px] text-[#94a3b8]">Member #4</div></div></div>
              <div class="-ml-px w-fit h-[21px] flex items-center px-[9px] rounded-full bg-[#ecfeff] border border-[#a5f3fc] text-[10px] font-bold text-[#00796b]">PEAK BUNDLE BUDDY PT</div>
              <div class="text-[12px] font-bold text-[#ef2b2b]">2499</div>
              <div class="text-[12px] font-medium text-[#334155]">24 Jun 2026</div>
              <div class="w-[44px] h-[21px] rounded-full border border-[#e2e8f0] bg-white text-[11px] font-semibold text-[#1e293b] flex items-center justify-center">Pay</div>
            </div>
            <div class="h-[47px] pt-[2px] border-b border-[#e9edf3] pl-[13px] pr-3 grid grid-cols-[251px_335px_149px_1fr_auto] items-center">
              <div class="flex items-center gap-[7px]"><div class="w-7 h-7 rounded-full bg-[#e2e8f0] text-[11px] font-bold text-[#334155] flex items-center justify-center">SS</div><div><div class="text-[12.3px] leading-[15px] font-semibold text-[#0f172a]">Sujith Sujo</div><div class="text-[9.6px] leading-[15px] text-[#94a3b8]">Member #3</div></div></div>
              <div class="-ml-px w-fit h-[21px] flex items-center px-[9px] rounded-full bg-[#ecfeff] border border-[#a5f3fc] text-[10px] font-bold text-[#00796b]">PEAK BUNDLE GROUP PT</div>
              <div class="text-[12px] font-bold text-[#ef2b2b]">2099</div>
              <div class="text-[12px] font-medium text-[#334155]">24 Jun 2026</div>
              <div class="w-[44px] h-[21px] rounded-full border border-[#e2e8f0] bg-white text-[11px] font-semibold text-[#1e293b] flex items-center justify-center">Pay</div>
            </div>
            <div class="h-[47px] pt-px pl-[13px] pr-3 grid grid-cols-[251px_335px_149px_1fr_auto] items-center">
              <div class="flex items-center gap-[7px]"><svg class="w-7 h-7" viewBox="0 0 28 28"><circle cx="14" cy="14" r="13.500" fill="#f7f7f4" stroke="#e2e8f0"/><path d="M7 4l3 1 1.500 6 3 2 7-.5 2 3-.5 4-.5 4-1.500-.5-.5-3.500-2.500-1.500-4 .5-1 3-2.500 2.500-1.500-1 2-4-1-3-2-4-1.500-1.500z" fill="#a9a9a3"/><path d="M8 6l1.500 4M11 10l-2 3M12 14l-2 2M14 13.500v5M16.500 13v5.500M19 13l-.5 5.500M21.500 14l-1.500 4.500M12 19l-2.500 4M20 20l1 4" stroke="#1f1f1e" stroke-width="1.100" fill="none"/></svg><div><div class="text-[12.3px] leading-[15px] font-semibold text-[#0f172a]">MEMBER 1</div><div class="text-[9.6px] leading-[15px] text-[#94a3b8]">Member #1</div></div></div>
              <div class="-ml-px w-[149px] h-[21px] flex items-center pl-[9px] rounded-l-full overflow-hidden whitespace-nowrap bg-[#ecfeff] border-y border-l border-[#a5f3fc] text-[10px] font-bold text-[#00796b]">PEAK BUNDLE GENERAL MEMBERSHIP</div>
              <div class="text-[12px] font-bold text-[#ef2b2b]">1050</div>
              <div class="text-[12px] font-medium text-[#334155]">23 Jun 2026</div>
              <div class="w-[44px] h-[21px] rounded-full border border-[#e2e8f0] bg-white text-[11px] font-semibold text-[#1e293b] flex items-center justify-center">Pay</div>
            </div>
          </section>

          <!-- Recent -->
          <section class="relative rounded-b-[14px] bg-white shadow-[0_2px_8px_rgba(15,23,42,0.08)] overflow-hidden flex flex-col">
            <div class="h-[58px] shrink-0 bg-[#f8fafc] border-b border-[#e2e8f0] px-3 flex items-center">
              <div class="pb-px"><div class="text-[14.2px] leading-[18px] font-semibold text-[#0f172a]">Recent Activities</div><div class="mt-[4px] text-[11.2px] leading-[16px] text-[#94a3b8]">Latest operational updates</div></div>
            </div>
            <div class="flex-1 min-h-0 overflow-hidden pl-[14px] pr-[29px] pt-[24px]">
              <div class="relative h-[74px]">
                <div class="absolute left-[11px] top-[23px] w-px h-[47px] bg-[#d8e2ee]"></div>
                <div class="h-[65px] border-b border-dashed border-[#dfe5ee] flex gap-[11px]">
                  <div class="w-[23px] h-[23px] rounded-full bg-[#dbeafe] flex items-center justify-center shrink-0"><svg class="w-3 h-3 text-[#4f46e5]" viewBox="0 0 16 16" fill="currentColor"><path d="M6 3.5a.5.5 0 0 1 .5-.5h8a.5.5 0 0 1 .5.5v9a.5.5 0 0 1-.5.5h-8a.5.5 0 0 1-.5-.5v-2a.5.5 0 0 0-1 0v2A1.5 1.5 0 0 0 6.5 14h8a1.5 1.5 0 0 0 1.5-1.5v-9A1.5 1.5 0 0 0 14.5 2h-8A1.5 1.5 0 0 0 5 3.5v2a.5.5 0 0 0 1 0z"/><path d="M11.854 8.354a.5.5 0 0 0 0-.708l-3-3a.5.5 0 1 0-.708.708L10.293 7.5H1.5a.5.5 0 0 0 0 1h8.793l-2.147 2.146a.5.5 0 0 0 .708.708z"/></svg></div>
                  <div><div class="text-[12px] leading-[18px] font-semibold text-[#334155]">Auth / Login</div><div class="mt-[2px] text-[12px] leading-[18px] text-[#475569]">Login executed</div><div class="mt-[3px] text-[10px] leading-[14px] text-[#94a3b8]">27 May 2026 11:10 AM</div></div>
                </div>
              </div>
              <div class="relative h-[74px]">
                <div class="absolute left-[11px] top-[23px] w-px h-[47px] bg-[#d8e2ee]"></div>
                <div class="h-[65px] border-b border-dashed border-[#dfe5ee] flex gap-[11px]">
                  <div class="w-[23px] h-[23px] rounded-full bg-[#dbeafe] flex items-center justify-center shrink-0"><svg class="w-3 h-3 text-[#4f46e5]" viewBox="0 0 16 16" fill="currentColor"><path d="M6 3.5a.5.5 0 0 1 .5-.5h8a.5.5 0 0 1 .5.5v9a.5.5 0 0 1-.5.5h-8a.5.5 0 0 1-.5-.5v-2a.5.5 0 0 0-1 0v2A1.5 1.5 0 0 0 6.5 14h8a1.5 1.5 0 0 0 1.5-1.5v-9A1.5 1.5 0 0 0 14.5 2h-8A1.5 1.5 0 0 0 5 3.5v2a.5.5 0 0 0 1 0z"/><path d="M11.854 8.354a.5.5 0 0 0 0-.708l-3-3a.5.5 0 1 0-.708.708L10.293 7.5H1.5a.5.5 0 0 0 0 1h8.793l-2.147 2.146a.5.5 0 0 0 .708.708z"/></svg></div>
                  <div><div class="text-[12px] leading-[18px] font-semibold text-[#334155]">Auth / Login</div><div class="mt-[2px] text-[12px] leading-[18px] text-[#475569]">Login executed</div><div class="mt-[3px] text-[10px] leading-[14px] text-[#94a3b8]">25 May 2026 07:28 PM</div></div>
                </div>
              </div>
              <div class="relative h-[74px]">
                <div class="absolute left-[11px] top-[23px] w-px h-[47px] bg-[#d8e2ee]"></div>
                <div class="h-[65px] border-b border-dashed border-[#dfe5ee] flex gap-[11px]">
                  <div class="w-[23px] h-[23px] rounded-full bg-[#dbeafe] flex items-center justify-center shrink-0"><svg class="w-3 h-3 text-[#4f46e5]" viewBox="0 0 16 16" fill="currentColor"><path d="M6 3.5a.5.5 0 0 1 .5-.5h8a.5.5 0 0 1 .5.5v9a.5.5 0 0 1-.5.5h-8a.5.5 0 0 1-.5-.5v-2a.5.5 0 0 0-1 0v2A1.5 1.5 0 0 0 6.5 14h8a1.5 1.5 0 0 0 1.5-1.5v-9A1.5 1.5 0 0 0 14.5 2h-8A1.5 1.5 0 0 0 5 3.5v2a.5.5 0 0 0 1 0z"/><path d="M11.854 8.354a.5.5 0 0 0 0-.708l-3-3a.5.5 0 1 0-.708.708L10.293 7.5H1.5a.5.5 0 0 0 0 1h8.793l-2.147 2.146a.5.5 0 0 0 .708.708z"/></svg></div>
                  <div><div class="text-[12px] leading-[18px] font-semibold text-[#334155]">Auth / Login</div><div class="mt-[2px] text-[12px] leading-[18px] text-[#475569]">Login executed</div><div class="mt-[3px] text-[10px] leading-[14px] text-[#94a3b8]">25 May 2026 03:58 AM</div></div>
                </div>
              </div>
              <div class="relative h-[74px]">
                <div class="absolute left-[11px] top-[23px] w-px h-[47px] bg-[#d8e2ee]"></div>
                <div class="h-[65px] flex gap-[11px]">
                  <div class="w-[23px] h-[23px] rounded-full bg-[#dbeafe] flex items-center justify-center shrink-0"><svg class="w-3 h-3 text-[#4f46e5]" viewBox="0 0 16 16" fill="currentColor"><path d="M12.5 16a3.5 3.5 0 1 0 0-7 3.5 3.5 0 0 0 0 7m1.679-4.493-1.335 2.226a.75.75 0 0 1-1.174.144l-.774-.773a.5.5 0 0 1 .708-.708l.547.548 1.17-1.951a.5.5 0 1 1 .858.514M11 5a3 3 0 1 1-6 0 3 3 0 0 1 6 0M8 7a2 2 0 1 0 0-4 2 2 0 0 0 0 4"/><path d="M8.256 14a4.5 4.5 0 0 1-.229-1.004H3c.001-.246.154-.986.832-1.664C4.484 10.68 5.711 10 8 10q.39 0 .74.025c.226-.341.496-.65.804-.918Q8.844 9.002 8 9c-5 0-6 3-6 4s1 1 1 1z"/></svg></div>
                  <div><div class="text-[12px] leading-[18px] font-semibold text-[#334155]">Members / View</div><div class="mt-[2px] text-[12px] leading-[18px] text-[#475569]">Viewed Member Sunilkumar MA (DEM-0002)</div><div class="mt-[3px] text-[10px] leading-[14px] text-[#94a3b8]">24 May 2026 02:41 PM</div></div>
                </div>
              </div>
            </div>
            <!-- scrollbar overlay -->
            <div class="absolute right-0 top-[58px] bottom-0 w-[15px] bg-[#fafafa] flex flex-col items-center">
              <div class="mt-[8px] w-0 h-0 border-x-[4px] border-x-transparent border-b-[4px] border-b-[#8d8d8d]"></div>
              <div class="mt-[7px] w-[9px] h-[103px] rounded-full bg-[#8d8d8d]"></div>
              <div class="mt-auto mb-[7px] w-0 h-0 border-x-[4px] border-x-transparent border-t-[4px] border-t-[#8d8d8d]"></div>
            </div>
          </section>
        </div>
      </main>
    </div>
  </div>
</div>
</body>
</html>
